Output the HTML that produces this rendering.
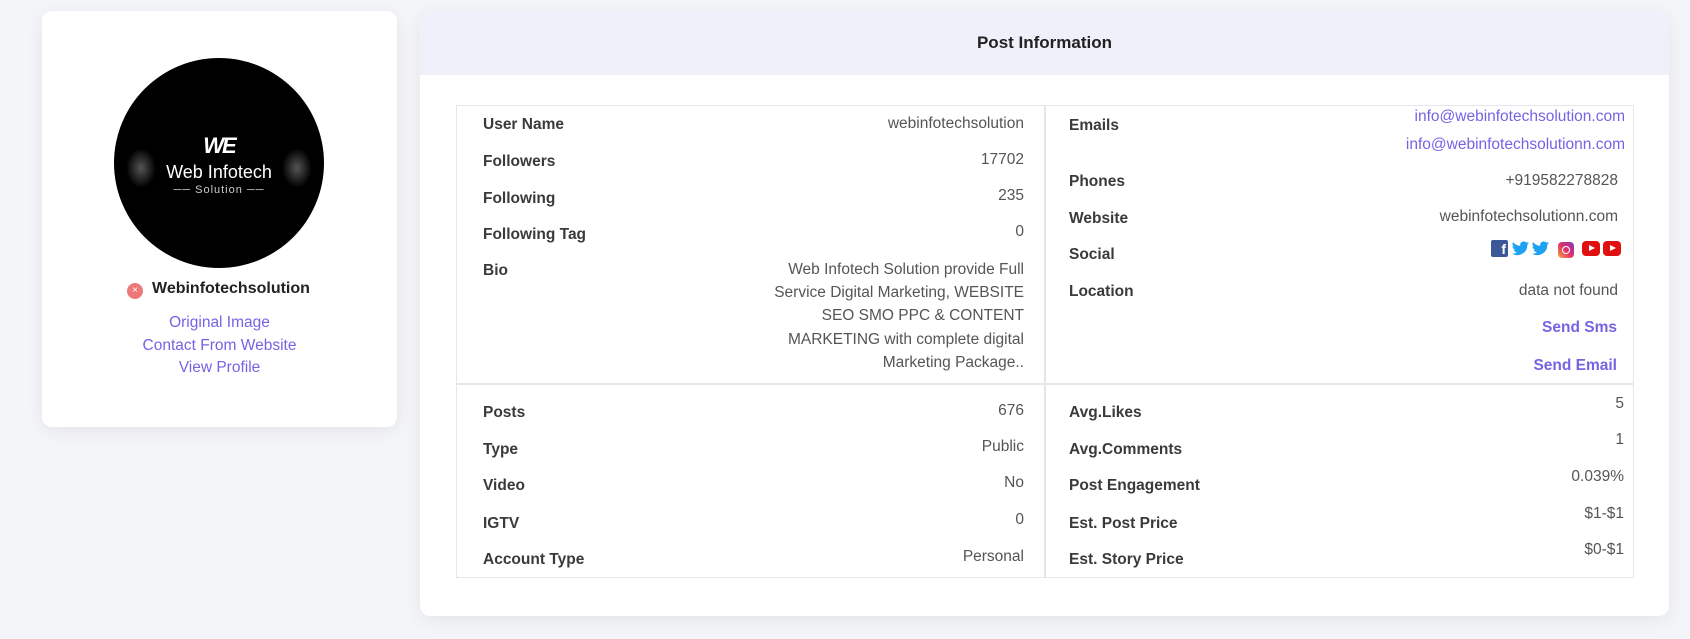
<!DOCTYPE html>
<html><head><style>
*{margin:0;padding:0;box-sizing:border-box}
body{width:1690px;height:639px;background:#f4f5f9;font-family:"Liberation Sans",Arial,sans-serif;position:relative;overflow:hidden;color:#333}
.card{position:absolute;background:#fff;border-radius:10px;box-shadow:0 4px 18px rgba(0,0,0,0.07)}
.a{position:absolute;white-space:nowrap}
.l{font-weight:bold;font-size:15.5px;color:#3a3a3a}
.v{font-size:15.5px;color:#555;text-align:right}
.p{color:#7464e4}
</style></head><body>
<div class="card" style="left:42px;top:11px;width:355px;height:416px"></div>
<div class="a" style="left:114px;top:58px;width:210px;height:210px;border-radius:50%;background:#000;overflow:hidden">
 <div class="a" style="left:12px;top:90px;width:30px;height:40px;border-radius:50%;background:radial-gradient(#555,#000 70%)"></div>
 <div class="a" style="right:12px;top:90px;width:30px;height:40px;border-radius:50%;background:radial-gradient(#555,#000 70%)"></div>
 <div class="a" style="left:0;width:210px;top:75px;text-align:center;color:#fff;font-weight:bold;font-style:italic;font-size:22px;letter-spacing:-2px">WE</div>
 <div class="a" style="left:0;width:210px;top:104px;text-align:center;color:#fff;font-size:18px">Web Infotech</div>
 <div class="a" style="left:43px;width:124px;top:126px;text-align:center;color:#ccc;font-size:11px;letter-spacing:1px;border-bottom:0 solid">── Solution ──</div>
</div>
<div class="a" style="left:127px;top:283px;width:16px;height:16px;border-radius:50%;background:#ee7777;color:#fff;font-size:10px;text-align:center;line-height:16px">×</div>
<div class="a" style="left:152px;top:280px;font-weight:bold;font-size:16px;color:#222">Webinfotechsolution</div>
<div class="a p" style="left:42px;width:355px;text-align:center;top:312px;font-size:15.5px;line-height:22.5px">Original Image<br>Contact From Website<br>View Profile</div>

<div class="card" style="left:420px;top:11px;width:1249px;height:605px;overflow:hidden">
 <div style="height:64px;background:#eff0f9;text-align:center;line-height:64px;font-weight:bold;font-size:17px;color:#222">Post Information</div>
</div>
<div class="a" style="left:456px;top:105px;width:1178px;height:473px;border:1px solid #e6e6ea"></div>
<div class="a" style="left:1044px;top:105px;width:2px;height:473px;background:#e6e6ea"></div>
<div class="a" style="left:456px;top:383px;width:1178px;height:2px;background:#e6e6ea"></div>

<div class="a l" style="left:483px;top:116px">User Name</div><div class="a v" style="right:666px;top:115px">webinfotechsolution</div>
<div class="a l" style="left:483px;top:153px">Followers</div><div class="a v" style="right:666px;top:151px">17702</div>
<div class="a l" style="left:483px;top:190px">Following</div><div class="a v" style="right:666px;top:187px">235</div>
<div class="a l" style="left:483px;top:226px">Following Tag</div><div class="a v" style="right:666px;top:223px">0</div>
<div class="a l" style="left:483px;top:262px">Bio</div>
<div class="a v" style="right:666px;top:258px;line-height:23.2px">Web Infotech Solution provide Full<br>Service Digital Marketing, WEBSITE<br>SEO SMO PPC &amp; CONTENT<br>MARKETING with complete digital<br>Marketing Package..</div>
<div class="a l" style="left:483px;top:404px">Posts</div><div class="a v" style="right:666px;top:402px">676</div>
<div class="a l" style="left:483px;top:441px">Type</div><div class="a v" style="right:666px;top:438px">Public</div>
<div class="a l" style="left:483px;top:477px">Video</div><div class="a v" style="right:666px;top:474px">No</div>
<div class="a l" style="left:483px;top:515px">IGTV</div><div class="a v" style="right:666px;top:511px">0</div>
<div class="a l" style="left:483px;top:551px">Account Type</div><div class="a v" style="right:666px;top:548px">Personal</div>

<div class="a l" style="left:1069px;top:117px">Emails</div>
<div class="a v p" style="right:65px;top:108px;color:#7464e4">info@webinfotechsolution.com</div>
<div class="a v p" style="right:65px;top:136px;color:#7464e4">info@webinfotechsolutionn.com</div>
<div class="a l" style="left:1069px;top:173px">Phones</div><div class="a v" style="right:72px;top:172px">+919582278828</div>
<div class="a l" style="left:1069px;top:210px">Website</div><div class="a v" style="right:72px;top:208px">webinfotechsolutionn.com</div>
<div class="a l" style="left:1069px;top:246px">Social</div>
<div class="a" style="left:1491px;top:240px;width:17px;height:17px;background:#3b5998;border-radius:2px;color:#fff;font-weight:bold;font-size:14px;text-align:right;padding-right:2px;line-height:19px">f</div>
<svg class="a" style="left:1511px;top:240px" width="40" height="17" viewBox="0 0 40 17"><path fill="#1da1f2" d="M18 3c-.7.3-1.3.5-2 .6.7-.5 1.3-1.1 1.5-1.9-.7.4-1.4.7-2.2.9a3.5 3.5 0 0 0-6 3.2C6.3 5.6 3.700 4.2 2 2.100c-1 1.600-.5 3.600 1.100 4.600-.6 0-1.100-.2-1.600-.4 0 1.700 1.200 3.100 2.800 3.400-.5.100-1 .2-1.600.1.4 1.400 1.700 2.400 3.300 2.400A7 7 0 0 1 1 13.600 10 10 0 0 0 16.300 4.800c.7-.5 1.300-1.100 1.700-1.800z"/><path fill="#1da1f2" transform="translate(20 0)" d="M18 3c-.7.3-1.3.5-2 .6.7-.5 1.3-1.1 1.5-1.9-.7.4-1.4.7-2.2.9a3.5 3.5 0 0 0-6 3.2C6.3 5.6 3.700 4.200 2 2.100c-1 1.600-.5 3.600 1.100 4.600-.6 0-1.100-.2-1.600-.4 0 1.700 1.200 3.100 2.800 3.400-.5.100-1 .2-1.600.1.4 1.400 1.700 2.400 3.300 2.400A7 7 0 0 1 1 13.600 10 10 0 0 0 16.300 4.800c.7-.5 1.300-1.100 1.700-1.800z"/></svg>
<div class="a" style="left:1558px;top:242px;width:16px;height:16px;border-radius:4px;background:linear-gradient(45deg,#f9a33b,#e1306c,#833ab4)"><div class="a" style="left:4px;top:4px;width:8px;height:8px;border:1.5px solid #fff;border-radius:50%"></div></div>
<div class="a" style="left:1582px;top:241px;width:18px;height:15px;background:#e01010;border-radius:4px"><div class="a" style="left:7px;top:4px;border-left:6px solid #fff;border-top:3.5px solid transparent;border-bottom:3.5px solid transparent"></div></div>
<div class="a" style="left:1603px;top:241px;width:18px;height:15px;background:#e01010;border-radius:4px"><div class="a" style="left:7px;top:4px;border-left:6px solid #fff;border-top:3.5px solid transparent;border-bottom:3.5px solid transparent"></div></div>
<div class="a l" style="left:1069px;top:283px">Location</div><div class="a v" style="right:72px;top:282px">data not found</div>
<div class="a l p" style="right:73px;top:319px;color:#7464e4">Send Sms</div>
<div class="a l p" style="right:73px;top:357px;color:#7464e4">Send Email</div>

<div class="a l" style="left:1069px;top:404px">Avg.Likes</div><div class="a v" style="right:66px;top:395px">5</div>
<div class="a l" style="left:1069px;top:441px">Avg.Comments</div><div class="a v" style="right:66px;top:431px">1</div>
<div class="a l" style="left:1069px;top:477px">Post Engagement</div><div class="a v" style="right:66px;top:468px">0.039%</div>
<div class="a l" style="left:1069px;top:515px">Est. Post Price</div><div class="a v" style="right:66px;top:505px">$1-$1</div>
<div class="a l" style="left:1069px;top:551px">Est. Story Price</div><div class="a v" style="right:66px;top:541px">$0-$1</div>
</body></html>
